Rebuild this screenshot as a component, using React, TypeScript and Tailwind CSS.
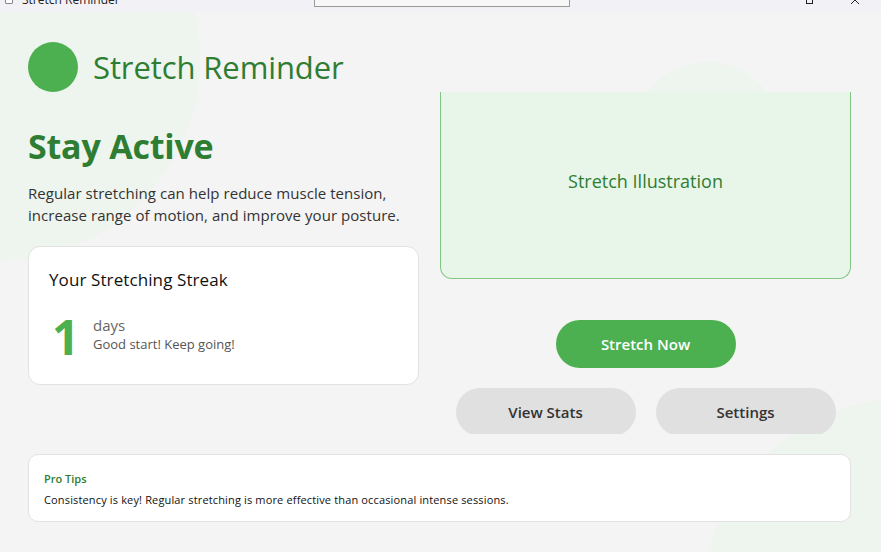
import React from 'react';

const TitleStrip: React.FC = () => (
  <div className="h-[12px] bg-[#f1f1f6] overflow-hidden relative z-10">
    <div className="-mt-[12px] h-[24px] flex items-center text-[12px] text-[#222]">
      <div className="ml-[5px] w-[8px] h-[8px] border border-[#888] rounded-[1px] bg-white" />
      <span className="ml-[9px]">Stretch Reminder</span>
      <div className="ml-[194px] w-[256px] h-[14px] border border-[#999] bg-[#f7f7f7]" />
      <div className="ml-auto mr-[38px] w-[7px] h-[8px] border border-[#222]" />
      <svg className="mr-[22px]" width="8" height="8" viewBox="0 0 8 8">
        <path d="M0 0L8 8M8 0L0 8" stroke="#222" strokeWidth="1" />
      </svg>
    </div>
  </div>
);

export default function App() {
  return (
    <div
      className="w-[881px] h-[552px] relative overflow-hidden bg-[#f4f4f4] text-[#333]"
      style={{ fontFamily: '"Open Sans", "Noto Sans", sans-serif' }}
    >
      <TitleStrip />

      {/* background blobs */}
      <div className="absolute -left-[200px] -top-[140px] w-[400px] h-[400px] rounded-full bg-[#edf5ee]" />
      <div className="absolute left-[632px] top-[62px] w-[150px] h-[150px] rounded-full bg-[#edf5ee]" />
      <div className="absolute left-[700px] top-[398px] w-[420px] h-[420px] rounded-full bg-[#edf5ee]" />

      <div className="relative pl-[28px] pr-[30px] pt-[30px]">
        <div className="flex items-center gap-[15px] h-[50px]">
          <div className="w-[50px] h-[50px] rounded-full bg-[#4caf50]" />
          <h1 className="text-[31px] leading-none font-medium text-[#2e7d32] tracking-[-0.1px]">Stretch Reminder</h1>
        </div>

        <div className="grid grid-cols-[391px_411px] gap-x-[21px] items-start">
          <div className="pt-[32px]">
            <h2 className="text-[34px] leading-[44px] font-bold text-[#2e7d32] tracking-[-0.2px]">Stay Active</h2>
            <p className="mt-[14px] text-[15px] leading-[22px] text-[#333] tracking-[0.05px]">
              Regular stretching can help reduce muscle tension,
              <br />
              increase range of motion, and improve your posture.
            </p>
            <div className="mt-[20px] h-[139px] bg-white border border-[#e2e2e2] rounded-[12px] px-[20px] pt-[20px]">
              <h3 className="text-[17px] leading-[26px] font-medium text-[#111] tracking-[0.1px]">Your Stretching Streak</h3>
              <div className="mt-[20px] flex items-center gap-[20px]">
                <div className="w-[24px] pl-[3px] text-[48px] leading-[48px] font-bold text-[#4caf50]">1</div>
                <div className="-mt-[6px]">
                  <div className="text-[15px] leading-[20px] text-[#666]">days</div>
                  <div className="text-[13px] leading-[18px] text-[#555]">Good start! Keep going!</div>
                </div>
              </div>
            </div>
          </div>

          <div className="flex flex-col items-center">
            <div className="w-full h-[187px] bg-[#e8f5e9] border-x border-b border-[#81c784] rounded-b-[12px] flex items-center justify-center pb-[8px]">
              <span className="text-[18px] text-[#2e7d32]">Stretch Illustration</span>
            </div>
            <button className="mt-[41px] w-[180px] h-[48px] rounded-full bg-[#4caf50] text-white text-[15px] font-semibold">
              Stretch Now
            </button>
            <div className="mt-[20px] h-[46px] overflow-hidden flex gap-[20px]">
              <button className="w-[180px] h-[48px] rounded-full bg-[#e0e0e0] text-[#333] text-[15px] font-semibold">
                View Stats
              </button>
              <button className="w-[180px] h-[48px] rounded-full bg-[#e0e0e0] text-[#333] text-[15px] font-semibold">
                Settings
              </button>
            </div>
          </div>
        </div>

        <div className="mt-[20px] h-[68px] bg-white border border-[#e2e2e2] rounded-[10px] px-[15px] pt-[16px]">
          <div className="text-[11px] leading-[16px] font-semibold text-[#2e7d32]">Pro Tips</div>
          <div className="mt-[5px] text-[11px] leading-[16px] text-[#111] tracking-[0.15px]">
            Consistency is key! Regular stretching is more effective than occasional intense sessions.
          </div>
        </div>
      </div>
    </div>
  );
}
